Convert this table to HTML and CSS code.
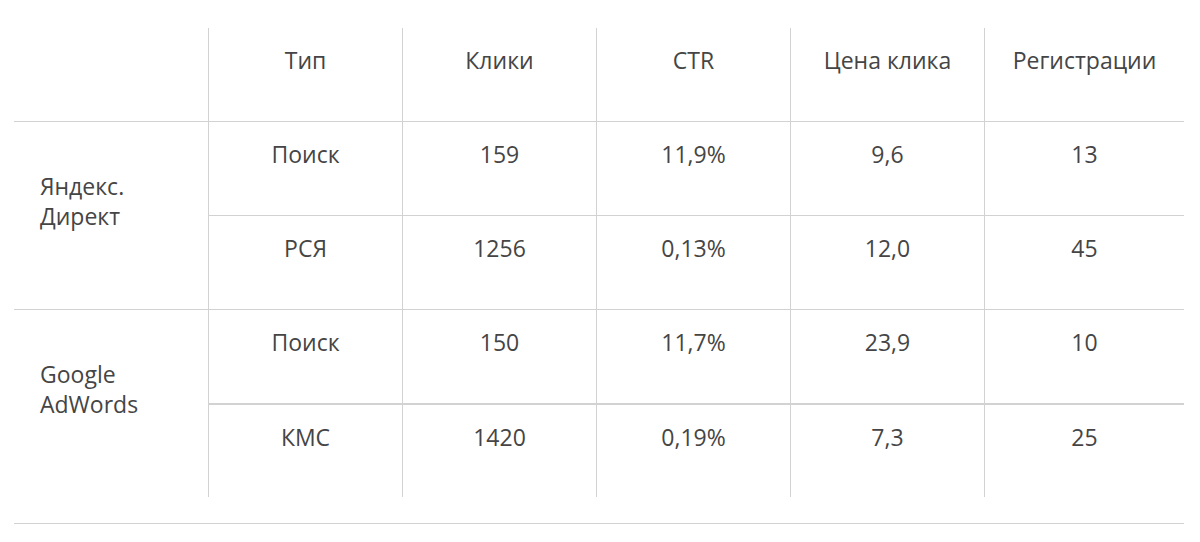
FILE: index.html
```html
<!DOCTYPE html>
<html lang="ru">
<head>
<meta charset="utf-8">
<title>Статистика</title>
<link rel="stylesheet" href="styles.css">
</head>
<body>
<div class="wrap">
  <div class="grid">
    <div class="cell head first"></div>
    <div class="cell head">Тип</div>
    <div class="cell head">Клики</div>
    <div class="cell head">CTR</div>
    <div class="cell head">Цена клика</div>
    <div class="cell head">Регистрации</div>

    <div class="cell source src-y">Яндекс.<br>Директ</div>
    <div class="cell r1">Поиск</div>
    <div class="cell r1">159</div>
    <div class="cell r1">11,9%</div>
    <div class="cell r1">9,6</div>
    <div class="cell r1">13</div>

    <div class="cell r2">РСЯ</div>
    <div class="cell r2">1256</div>
    <div class="cell r2">0,13%</div>
    <div class="cell r2">12,0</div>
    <div class="cell r2">45</div>

    <div class="cell source src-g">Google<br>AdWords</div>
    <div class="cell r3">Поиск</div>
    <div class="cell r3">150</div>
    <div class="cell r3">11,7%</div>
    <div class="cell r3">23,9</div>
    <div class="cell r3">10</div>

    <div class="cell r4">КМС</div>
    <div class="cell r4">1420</div>
    <div class="cell r4">0,19%</div>
    <div class="cell r4">7,3</div>
    <div class="cell r4">25</div>
  </div>
  <div class="rule"></div>
</div>
</body>
</html>
```
FILE: styles.css
```css
html, body {
  margin: 0;
  padding: 0;
  background: #ffffff;
}

.wrap {
  padding: 28px 16px 0 14px;
  width: 1170px;
}

.grid {
  display: grid;
  grid-template-columns: repeat(5, 194px) 200px;
  grid-template-rows: 94px 94px 94px 95px 92px;
  font-family: "Open Sans", "Liberation Sans", sans-serif;
  font-size: 23px;
  line-height: 30px;
  color: #454545;
}

.cell {
  box-sizing: border-box;
  text-align: center;
  padding-top: 17px;
  border-left: 1px solid #d2d2d2;
}

.head {
  border-bottom: 1px solid #d2d2d2;
}

.first {
  border-left: none;
}

.source {
  border-left: none;
  text-align: left;
  padding-left: 26px;
  padding-top: 49px;
}

.src-y {
  grid-row: 2 / span 2;
  border-bottom: 1px solid #d2d2d2;
}

.src-g {
  grid-row: 4 / span 2;
}

.r1 {
  border-bottom: 1px solid #d2d2d2;
}

.r2 {
  border-bottom: 1px solid #d2d2d2;
}

.r3 {
  border-bottom: 2px solid #d2d2d2;
}

.rule {
  margin-top: 26px;
  border-top: 1px solid #d2d2d2;
}
```
